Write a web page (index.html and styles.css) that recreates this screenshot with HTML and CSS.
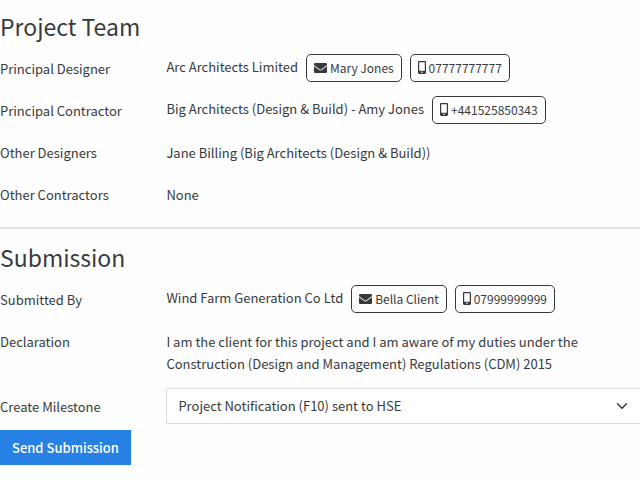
FILE: index.html
```
<!DOCTYPE html>
<html lang="en">
<head>
<meta charset="utf-8">
<title>Project Notification</title>
<link rel="stylesheet" href="styles.css">
</head>
<body>
<svg class="sprite" aria-hidden="true">
	<symbol id="envelope" viewBox="0 64 512 384" preserveAspectRatio="none">
		<path fill="currentColor" d="M502.3 190.800c3.900-3.100 9.700-.2 9.700 4.700V400c0 26.500-21.500 48-48 48H48c-26.500 0-48-21.500-48-48V195.600c0-5 5.700-7.800 9.700-4.700 22.400 17.400 52.100 39.500 154.100 113.600 21.100 15.400 56.700 47.800 92.200 47.600 35.700.3 72-32.800 92.300-47.600 102-74.100 131.600-96.300 154-113.700zM256 320c23.200.4 56.600-29.200 73.400-41.400 132.700-96.300 142.800-104.700 173.400-128.700 5.800-4.500 9.200-11.500 9.200-18.900v-19c0-26.500-21.500-48-48-48H48c-26.500 0-48 21.500-48 48v19c0 7.400 3.400 14.300 9.200 18.900 30.600 23.900 40.700 32.400 173.400 128.700 16.800 12.200 50.200 41.800 73.400 41.400z"/>
	</symbol>
	<symbol id="mobile" viewBox="0 0 320 512">
		<path fill="currentColor" d="M272 0H48C21.500 0 0 21.500 0 48v416c0 26.500 21.500 48 48 48h224c26.500 0 48-21.500 48-48V48c0-26.500-21.500-48-48-48zM160 480c-17.700 0-32-14.300-32-32s14.300-32 32-32 32 14.300 32 32-14.300 32-32 32zm112-108c0 6.600-5.400 12-12 12H60c-6.600 0-12-5.400-12-12V60c0-6.600 5.400-12 12-12h200c6.600 0 12 5.400 12 12v312z"/>
	</symbol>
</svg>

<section>
	<h2>Project Team</h2>
	<dl>
		<div class="row">
			<dt>Principal Designer</dt>
			<dd class="contact">Arc Architects Limited
				<a class="chip" href="#"><svg class="envelope"><use href="#envelope"/></svg>Mary Jones</a>
				<a class="chip" href="#"><svg class="mobile"><use href="#mobile"/></svg>07777777777</a>
			</dd>
		</div>
		<div class="row">
			<dt>Principal Contractor</dt>
			<dd class="contact">Big Architects (Design &amp; Build) - Amy Jones
				<a class="chip" href="#"><svg class="mobile"><use href="#mobile"/></svg>+441525850343</a>
			</dd>
		</div>
		<div class="row">
			<dt>Other Designers</dt>
			<dd>Jane Billing (Big Architects (Design &amp; Build))</dd>
		</div>
		<div class="row">
			<dt>Other Contractors</dt>
			<dd>None</dd>
		</div>
	</dl>
</section>

<hr>

<form>
	<h2>Submission</h2>
	<dl>
		<div class="row">
			<dt>Submitted By</dt>
			<dd class="contact">Wind Farm Generation Co Ltd
				<a class="chip" href="#"><svg class="envelope"><use href="#envelope"/></svg>Bella Client</a>
				<a class="chip" href="#"><svg class="mobile"><use href="#mobile"/></svg>07999999999</a>
			</dd>
		</div>
		<div class="row">
			<dt>Declaration</dt>
			<dd class="declaration">I am the client for this project and I am aware of my duties under the Construction (Design and Management) Regulations (CDM) 2015</dd>
		</div>
	</dl>
	<div class="row">
		<label for="milestone">Create Milestone</label>
		<div class="select">
			<select id="milestone">
				<option>Project Notification (F10) sent to HSE</option>
			</select>
			<svg class="chevron" viewBox="0 0 16 16" aria-hidden="true"><path d="M2 5l6 6 6-6" fill="none" stroke="currentColor" stroke-width="2" stroke-linecap="round" stroke-linejoin="round"/></svg>
		</div>
	</div>
	<button class="submit" type="submit">Send Submission</button>
</form>
</body>
</html>
```
FILE: styles.css
```
* {
	box-sizing: border-box;
}

body {
	margin: 0;
	padding-top: 12px;
	background: #fefefe;
	color: #373a3c;
	font: 13px/22px "Noto Sans CJK SC", "Open Sans", sans-serif;
}

h2 {
	margin: 0 0 10px;
	font-size: 23px;
	font-weight: 400;
	line-height: 28px;
}

dl,
dd {
	margin: 0;
}

.sprite {
	display: none;
}

.row {
	display: grid;
	grid-template-columns: 26% 1fr;
	min-height: 42px;
}

.row dt,
.row dd,
.row label {
	padding: 8px 0;
}

.row .contact {
	padding: 4px 0 0;
}

.row .declaration {
	padding-right: 40px;
	padding-bottom: 13px;
}

.chip {
	display: inline-block;
	margin-left: 5px;
	padding: 3px 7px;
	border: 1px solid #373a3c;
	border-radius: 5px;
	color: #373a3c;
	font-size: 12px;
	line-height: 20px;
	text-decoration: none;
	vertical-align: middle;
}

.chip svg {
	margin-right: 3px;
}

.envelope {
	width: 13px;
	height: 10px;
}

.mobile {
	width: 8px;
	height: 13px;
	vertical-align: -1px;
}

hr {
	margin: 9px 0 14px;
	border: 0;
	border-top: 2px solid #e2e2e2;
}

.select {
	position: relative;
}

.select select {
	width: 100%;
	height: 36px;
	padding: 0 36px 0 11px;
	border: 1px solid #dcdcdc;
	border-right: 0;
	border-radius: 0;
	background: #fff;
	color: #373a3c;
	font: inherit;
	appearance: none;
}

.chevron {
	position: absolute;
	top: 12px;
	right: 12px;
	width: 12px;
	height: 12px;
	pointer-events: none;
}

.submit {
	padding: 6px 12px;
	border: 0;
	background: #2780e3;
	color: #fff;
	font: inherit;
	font-weight: 500;
	line-height: 23px;
}
```
